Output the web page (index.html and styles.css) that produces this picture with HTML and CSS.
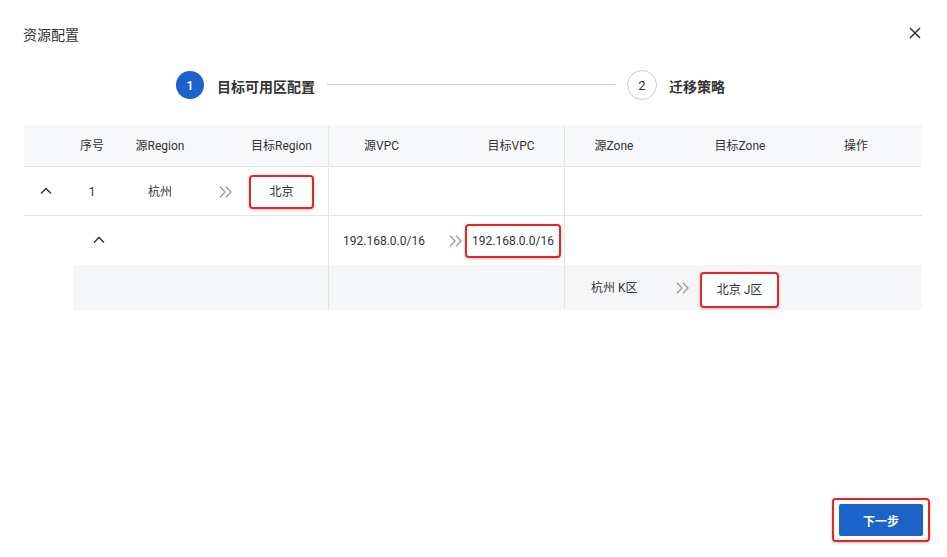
FILE: index.html
```html
<!DOCTYPE html>
<html lang="zh-CN">
<head>
<meta charset="utf-8">
<title>资源配置</title>
<link rel="stylesheet" href="styles.css">
</head>
<body>
<div class="dialog">
  <div class="header">
    <span class="title">资源配置</span>
    <span class="close">
      <svg width="12" height="12" viewBox="0 0 12 12"><path d="M1 1 L11 11 M11 1 L1 11" stroke="#333" stroke-width="1.5" fill="none"/></svg>
    </span>
  </div>

  <div class="steps">
    <span class="step-dot active">1</span>
    <span class="step-label label-1">目标可用区配置</span>
    <span class="step-line"></span>
    <span class="step-dot">2</span>
    <span class="step-label">迁移策略</span>
  </div>

  <div class="table">
    <div class="row thead">
      <div class="grp g-region">
        <div class="cell w44"></div>
        <div class="cell w48">序号</div>
        <div class="cell w88">源Region</div>
        <div class="cell w43"></div>
        <div class="cell w69">目标Region</div>
      </div>
      <div class="grp g-vpc">
        <div class="cell w105">源VPC</div>
        <div class="cell w24"></div>
        <div class="cell w106">目标VPC</div>
      </div>
      <div class="grp g-zone">
        <div class="cell w98">源Zone</div>
        <div class="cell w27"></div>
        <div class="cell w100">目标Zone</div>
        <div class="cell w16"></div>
        <div class="cell w100">操作</div>
      </div>
    </div>

    <div class="row r1">
      <div class="grp g-region">
        <div class="cell w44"><svg class="chev" width="12" height="8" viewBox="0 0 12 8"><path d="M1 6.5 L6 1.5 L11 6.5" stroke="#333" stroke-width="1.5" fill="none"/></svg></div>
        <div class="cell w48">1</div>
        <div class="cell w88">杭州</div>
        <div class="cell w43"><svg width="14" height="12" viewBox="0 0 14 12"><path d="M1 0.8 L6 6 L1 11.2 M7 0.8 L12 6 L7 11.2" stroke="#9a9a9a" stroke-width="1.3" fill="none"/></svg></div>
        <div class="cell w69"><span class="hl hl-region">北京</span></div>
      </div>
      <div class="grp g-vpc"></div>
      <div class="grp g-zone"></div>
    </div>

    <div class="row r2">
      <div class="grp g-region sub">
        <div class="cell w52"><svg class="chev" width="12" height="8" viewBox="0 0 12 8"><path d="M1 6.5 L6 1.5 L11 6.5" stroke="#333" stroke-width="1.5" fill="none"/></svg></div>
      </div>
      <div class="grp g-vpc">
        <div class="cell w117 left">192.168.0.0/16</div>
        <div class="cell w19"><svg width="14" height="12" viewBox="0 0 14 12"><path d="M1 0.8 L6 6 L1 11.2 M7 0.8 L12 6 L7 11.2" stroke="#9a9a9a" stroke-width="1.3" fill="none"/></svg></div>
        <div class="cell w96"><span class="hl hl-vpc">192.168.0.0/16</span></div>
      </div>
      <div class="grp g-zone"></div>
    </div>

    <div class="row r3">
      <div class="grp g-region"></div>
      <div class="grp g-vpc"></div>
      <div class="grp g-zone">
        <div class="cell w109 left pad26">杭州 K区</div>
        <div class="cell w18"><svg width="14" height="12" viewBox="0 0 14 12"><path d="M1 0.8 L6 6 L1 11.2 M7 0.8 L12 6 L7 11.2" stroke="#9a9a9a" stroke-width="1.3" fill="none"/></svg></div>
        <div class="cell w8"></div>
        <div class="cell w79"><span class="hl hl-zone">北京 J区</span></div>
      </div>
    </div>
  </div>

  <div class="footer">
    <span class="hl-btn"><button class="btn-primary">下一步</button></span>
  </div>
</div>
</body>
</html>
```

FILE: styles.css
```css
html, body {
  margin: 0;
  padding: 0;
  background: #fff;
}

body {
  font-family: Roboto, "Noto Sans CJK SC", sans-serif;
  color: #333;
  font-size: 12px;
}

.dialog {
  width: 947px;
  height: 557px;
  display: flex;
  flex-direction: column;
  box-sizing: border-box;
}

.header {
  display: flex;
  justify-content: space-between;
  align-items: center;
  height: 38px;
  margin-top: 16px;
  padding: 0 26px 0 23px;
}

.title {
  font-size: 14px;
  line-height: 20px;
  color: #333;
}

.close {
  display: flex;
  margin-bottom: 5px;
}

.steps {
  display: flex;
  align-items: center;
  height: 40px;
  margin-top: 11px;
  padding-left: 176px;
}

.step-dot {
  width: 30px;
  height: 30px;
  box-sizing: border-box;
  border-radius: 50%;
  border: 1px solid #c8cdd5;
  display: flex;
  align-items: center;
  justify-content: center;
  font-size: 13px;
  color: #333;
  margin-left: 12px;
}

.step-dot.active {
  width: 28px;
  height: 28px;
  border: none;
  background: #1b63c8;
  color: #fff;
  font-weight: 500;
  margin-left: 0;
}

.step-label {
  font-size: 14px;
  font-weight: 600;
  color: #333;
  margin-left: 12px;
  line-height: 20px;
  margin-top: 3px;
}

.label-1 {
  margin-left: 13px;
}

.step-line {
  width: 288px;
  height: 1px;
  background: #c5cad2;
  margin-left: 12px;
  margin-top: -1px;
}

.table {
  margin: 20px 0 0 24px;
  width: 898px;
}

.row {
  display: flex;
}

.grp {
  display: flex;
  align-items: center;
  box-sizing: border-box;
  align-self: stretch;
}

.g-region { width: 304px; }
.g-vpc { width: 236px; border-left: 1px solid #e4e4e4; }
.g-zone { width: 358px; border-left: 1px solid #e4e4e4; }

.thead {
  height: 42px;
  background: #f7f8fa;
  border-bottom: 1px solid #e4e4e4;
  box-sizing: border-box;
  padding-top: 1px;
}

.r1 {
  height: 49px;
  border-bottom: 1px solid #e4e4e4;
  box-sizing: border-box;
  padding-top: 1px;
}

.r2 {
  height: 49px;
}

.r3 {
  height: 45px;
  margin-left: 49px;
  background: #f5f6f7;
}

.r3 .g-region { width: 255px; }

.sub { padding-left: 49px; }

.cell {
  display: flex;
  align-items: center;
  justify-content: center;
  white-space: nowrap;
  line-height: 18px;
  flex: none;
}

.cell.left { justify-content: flex-start; padding-left: 14px; box-sizing: border-box; }
.cell.pad26 { padding-left: 26px; }

.w8 { width: 8px; }
.w16 { width: 16px; }
.w18 { width: 18px; }
.w19 { width: 19px; }
.w24 { width: 24px; }
.w27 { width: 27px; }
.w43 { width: 43px; }
.w44 { width: 44px; }
.w48 { width: 48px; }
.w52 { width: 52px; }
.w69 { width: 69px; }
.w79 { width: 79px; }
.w88 { width: 88px; }
.w96 { width: 96px; }
.w98 { width: 98px; }
.w100 { width: 100px; }
.w105 { width: 105px; }
.w106 { width: 106px; }
.w109 { width: 109px; }
.w117 { width: 117px; }

.chev { margin-top: -1px; }

.hl {
  display: flex;
  align-items: center;
  justify-content: center;
  box-sizing: border-box;
  border: 2px solid #e5252a;
  border-radius: 4px;
  box-shadow: 0 1px 3px rgba(0, 0, 0, 0.25);
  background: #fff;
  white-space: nowrap;
}

.hl-region { width: 65px; height: 34px; margin-top: 1px; }
.hl-vpc { width: 96px; height: 34px; }
.hl-zone { width: 79px; height: 36px; margin-top: 5px; }

.footer {
  margin-top: auto;
  display: flex;
  justify-content: flex-end;
  padding: 0 17px 15px 0;
}

.hl-btn {
  display: flex;
  padding: 4px 5px;
  border: 2px solid #e5252a;
  border-radius: 4px;
  box-shadow: 0 1px 3px rgba(0, 0, 0, 0.25);
}

.btn-primary {
  width: 84px;
  height: 32px;
  border: none;
  border-radius: 2px;
  background: #1b63c8;
  color: #fff;
  font-family: Roboto, "Noto Sans CJK SC", sans-serif;
  font-size: 12px;
  font-weight: 700;
  padding: 0;
}
```
